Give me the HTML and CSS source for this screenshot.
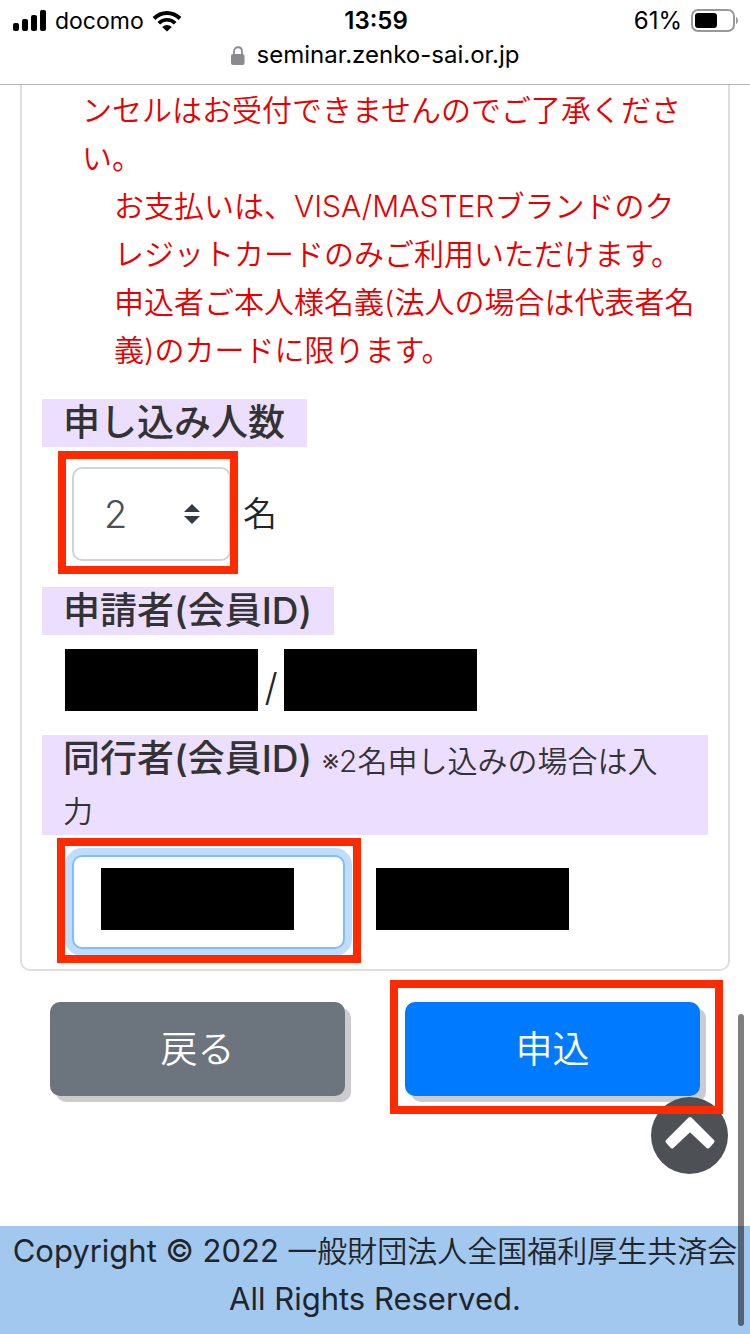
FILE: index.html
```html
<!DOCTYPE html>
<html lang="ja">
<head>
  <meta charset="UTF-8" />
  <meta name="viewport" content="width=device-width, initial-scale=1" />
  <title>セミナー申し込み</title>
  <link rel="stylesheet" href="styles.css">
</head>
<body>

  <header>
    <div class="status-bar">
      <div class="carrier">
        <svg width="34" height="22" viewBox="0 0 34 22" aria-hidden="true">
          <rect x="0" y="13" width="6" height="8" rx="2"/>
          <rect x="9" y="9" width="6" height="12" rx="2"/>
          <rect x="18" y="5" width="6" height="16" rx="2"/>
          <rect x="27" y="0" width="6" height="21" rx="2"/>
        </svg>
        <span>docomo</span>
        <svg width="30" height="22" viewBox="0 0 30 22" aria-hidden="true">
          <path d="M2 8.5C9.5 1 20.5 1 28 8.5" fill="none" stroke="#000" stroke-width="4"/>
          <path d="M6.8 13.3C11.5 8.6 18.5 8.6 23.2 13.3" fill="none" stroke="#000" stroke-width="3.6"/>
          <path d="M10.2 17C13 14.2 17 14.2 19.8 17L15 21.6Z"/>
        </svg>
      </div>
      <div class="clock">13:59</div>
      <div class="battery">
        <span>61%</span>
        <svg width="48" height="24" viewBox="0 0 48 24" aria-hidden="true">
          <rect x="1" y="1" width="42" height="21" rx="6" fill="none" stroke="#999" stroke-width="2"/>
          <rect x="4" y="4" width="22" height="15" rx="3"/>
          <path d="M45 8C47.6 9 47.6 14 45 15Z" fill="#999"/>
        </svg>
      </div>
    </div>
    <div class="address">
      <svg width="14" height="19" viewBox="0 0 14 19" aria-hidden="true">
        <path d="M3 9V5.5C3 -.2 11 -.2 11 5.5V9" fill="none" stroke="#8a8a8e" stroke-width="1.8"/>
        <rect x="0" y="8" width="13.5" height="11" rx="2" fill="#8a8a8e"/>
      </svg>
      <span>seminar.zenko-sai.or.jp</span>
    </div>
  </header>

  <main>
    <form id="entryForm">
      <div class="card">
        <div class="notice">
          <p>ンセルはお受付できませんのでご了承くださ<br>い。</p>
          <p class="indent">お支払いは、VISA/MASTERブランドのク<br>レジットカードのみご利用いただけます。<br>申込者ご本人様名義(法人の場合は代表者名<br>義)のカードに限ります。</p>
        </div>

        <h2><label for="count">申し込み人数</label></h2>
        <div class="row count-row">
          <div class="marked mark-count">
            <select id="count">
              <option>1</option>
              <option selected>2</option>
            </select>
            <svg class="arrows" width="16" height="20" viewBox="0 0 16 20" aria-hidden="true">
              <path d="M0 8L8 0L16 8ZM0 12L8 20L16 12Z"/>
            </svg>
          </div>
          <span class="unit">名</span>
        </div>

        <h2>申請者(会員ID)</h2>
        <div class="row applicant-row">
          <span class="mask"></span>
          <span class="slash">/</span>
          <span class="mask"></span>
        </div>

        <h2><label for="companion">同行者(会員ID) <small>※2名申し込みの場合は入力</small></label></h2>
        <div class="row companion-row">
          <div class="marked mark-companion">
            <input type="text" id="companion">
            <span class="mask mask-over"></span>
          </div>
          <span class="mask"></span>
        </div>
      </div>

      <div class="buttons">
        <button type="button" class="btn-back">戻る</button>
        <div class="marked mark-submit">
          <button type="submit" class="btn-submit">申込</button>
        </div>
      </div>
    </form>
  </main>

  <a href="#entryForm" class="page-top" aria-label="ページの先頭へ">
    <svg width="52" height="34" viewBox="0 0 52 34" aria-hidden="true">
      <path d="M26 3L48.5 25.5L44 30.5L26 13.5L8 30.5L3.5 25.5Z" fill="#fff" stroke="#fff" stroke-width="4" stroke-linejoin="round"/>
    </svg>
  </a>

  <footer>
    <span class="latin">Copyright © 2022</span> 一般財団法人全国福利厚生共済会<br><span class="latin">All Rights Reserved.</span>
  </footer>

  <div class="scrollbar"></div>

</body>
</html>
```
FILE: styles.css
```css
* {
  box-sizing: border-box;
}

body {
  margin: 0;
  min-height: 100vh;
  display: flex;
  flex-direction: column;
  background: #fff;
  color: #212529;
  font-family: Inter, "Noto Sans CJK JP", sans-serif;
  font-size: 30px;
  font-weight: 350;
  line-height: 48px;
}

header {
  height: 85px;
  border-bottom: 1px solid #b2b2b2;
  color: #000;
  font-size: 24px;
  font-weight: 400;
  line-height: 34px;
}

.status-bar {
  display: grid;
  grid-template-columns: 1fr auto 1fr;
  align-items: center;
  padding: 4px 11px 0 13px;
}

.carrier,
.battery,
.address {
  display: flex;
  align-items: center;
  gap: 9px;
}

.carrier {
  gap: 8px;
  font-size: 23px;
}

.battery {
  justify-content: flex-end;
}

.clock {
  font-weight: 600;
}

.address {
  justify-content: center;
  gap: 12px;
}

main {
  flex: 1;
}

.card {
  margin: 0 20px;
  padding: 0 20px 20px;
  border: 2px solid #dedede;
  border-top: none;
  border-radius: 0 0 10px 10px;
}

.notice {
  padding: 1px 0 25px 40px;
  color: #e60000;
  white-space: nowrap;
}

.notice p {
  margin: 0;
}

.notice .indent {
  padding-left: 32px;
}

h2 {
  width: fit-content;
  margin: 0;
  padding: 0 22px 0 21px;
  background: #ecdeff;
  color: #333;
  font-size: 37px;
  font-weight: 500;
  line-height: 48px;
}

h2 small {
  font-size: 30px;
  font-weight: 350;
}

.row {
  display: flex;
  align-items: center;
}

.count-row {
  gap: 12px;
  padding: 20px 0 26px 30px;
}

.unit {
  font-size: 34px;
}

.applicant-row {
  padding: 14px 0 24px 23px;
}

.slash {
  width: 26px;
  padding-top: 14px;
  font-size: 38px;
  text-align: center;
}

.companion-row {
  align-items: flex-start;
  gap: 31px;
  padding-left: 30px;
  padding-top: 20px;
}

/* red frames drawn over the parts to fill in */
.marked {
  position: relative;
}

.marked::after {
  content: "";
  position: absolute;
  z-index: 5;
  border: 8px solid #ff2a00;
  pointer-events: none;
}

.mark-count::after {
  inset: -16px -7px -13px -14px;
}

.mark-companion::after {
  inset: -17px -16px -14px -15px;
}

.mark-submit::after {
  inset: -22px -23px -18px -15px;
}

select,
input {
  display: block;
  height: 94px;
  border: 2px solid #ced4da;
  border-radius: 10px;
  background: #fff;
  color: #495057;
  font-family: inherit;
  font-size: 38px;
  font-weight: 350;
}

select {
  width: 159px;
  padding: 0 30px;
  appearance: none;
}

.arrows {
  position: absolute;
  top: 37px;
  right: 31px;
  fill: #343a40;
  pointer-events: none;
}

input {
  width: 273px;
  padding: 0 28px;
  border-color: #80bdff;
  box-shadow: 0 0 0 7px #bfdeff;
}

.mask {
  width: 193px;
  height: 62px;
  background: #000;
}

.mask-over {
  position: absolute;
  top: 13px;
  left: 29px;
}

.companion-row > .mask {
  margin-top: 13px;
}

.buttons {
  display: grid;
  grid-template-columns: 1fr 1fr;
  gap: 60px;
  padding: 31px 50px;
}

button {
  display: block;
  width: 100%;
  height: 94px;
  padding: 0 6px 4px;
  border: none;
  border-radius: 10px;
  box-shadow: 6px 6px 0 #ccc;
  color: #fff;
  font-family: inherit;
  font-size: 37px;
  font-weight: 350;
}

.btn-back {
  background: #6c757d;
}

.btn-submit {
  background: #007bff;
}

.page-top {
  position: fixed;
  right: 22px;
  bottom: 160px;
  z-index: 2;
  display: flex;
  justify-content: center;
  width: 77px;
  height: 77px;
  padding-top: 19px;
  border-radius: 50%;
  background: #4d5155;
}

footer {
  padding: 1px 0 11px;
  background: #a2c8ef;
  text-align: center;
  white-space: nowrap;
}

footer .latin {
  font-size: 31px;
  font-weight: 400;
}

.scrollbar {
  position: fixed;
  right: 6px;
  bottom: 8px;
  width: 6px;
  height: 312px;
  border-radius: 3px;
  background: rgba(0, 0, 0, 0.5);
}
```
